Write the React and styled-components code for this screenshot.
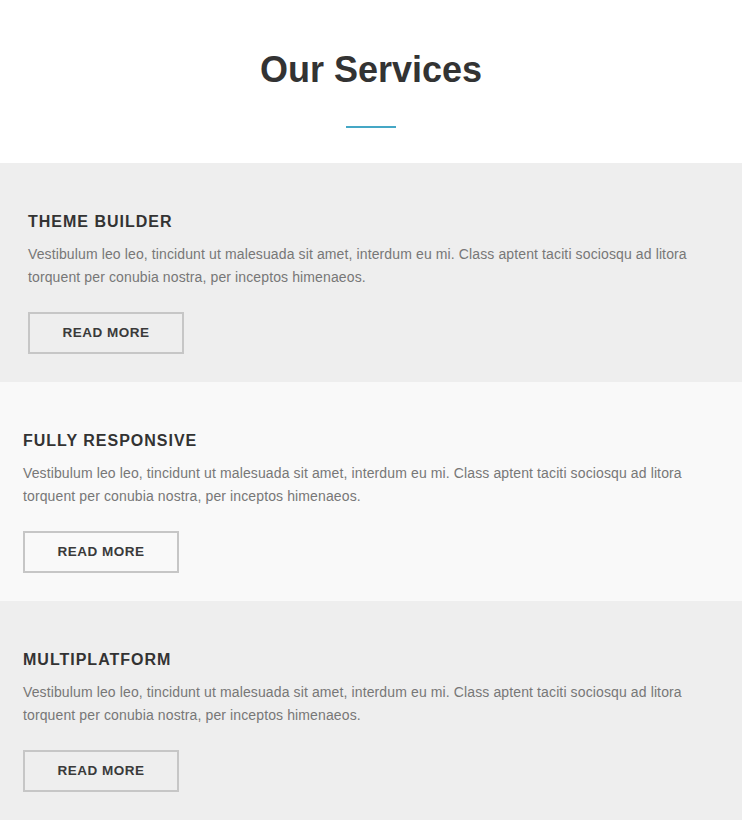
import styled, { createGlobalStyle } from "styled-components";

const GlobalStyle = createGlobalStyle`
body {
  margin: 0;
  background: #fff;
  font-family: "Liberation Sans", Arial, sans-serif;
}
`;

const Page = styled.div`
display: flex;
flex-direction: column;
padding-bottom: 14px;
`;

const Header = styled.header`
display: flex;
flex-direction: column;
align-items: center;
padding-top: 48px;
padding-bottom: 35px;
`;

const Title = styled.h1`
margin: 0;
font-size: 36px;
line-height: 44px;
font-weight: bold;
color: #333;
`;

const Divider = styled.span`
display: block;
width: 50px;
height: 2px;
margin-top: 34px;
background-color: #45a7c5;
`;

const Service = styled.section`
display: flex;
flex-direction: column;
align-items: flex-start;
padding: 49px 30px 28px ${(p) => p.$indent}px;
background-color: ${(p) => p.$bg};
`;

const ServiceName = styled.h2`
margin: 0;
font-size: 16px;
line-height: 20px;
font-weight: bold;
letter-spacing: 1px;
text-transform: uppercase;
color: #333;
`;

const ServiceText = styled.p`
margin: 11px 0 0;
font-size: 14px;
line-height: 23px;
letter-spacing: 0.12px;
color: #777;
`;

const ReadMore = styled.a`
display: flex;
align-items: center;
justify-content: center;
box-sizing: border-box;
width: 156px;
height: 42px;
margin-top: 23px;
padding-bottom: 1px;
border: 2px solid #c6c6c6;
font-size: 13.5px;
font-weight: bold;
letter-spacing: 0.5px;
color: #3a3a3a;
text-decoration: none;
cursor: pointer;
`;

const text =
  "Vestibulum leo leo, tincidunt ut malesuada sit amet, interdum eu mi. Class aptent taciti sociosqu ad litora torquent per conubia nostra, per inceptos himenaeos.";

const services = [
  { name: "Theme Builder", bg: "#eeeeee", indent: 28 },
  { name: "Fully Responsive", bg: "#f9f9f9", indent: 23 },
  { name: "Multiplatform", bg: "#eeeeee", indent: 23 },
];

export default function App() {
  return (
    <Page>
      <GlobalStyle />
      <Header>
        <Title>Our Services</Title>
        <Divider />
      </Header>
      {services.map((s) => (
        <Service key={s.name} $bg={s.bg} $indent={s.indent}>
          <ServiceName>{s.name}</ServiceName>
          <ServiceText>{text}</ServiceText>
          <ReadMore>READ MORE</ReadMore>
        </Service>
      ))}
    </Page>
  );
}
